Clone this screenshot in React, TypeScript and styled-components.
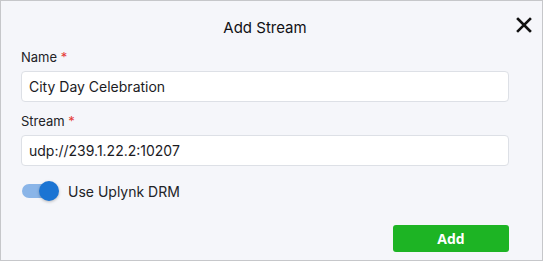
import React from "react";
import styled, { createGlobalStyle } from "styled-components";

const GlobalStyle = createGlobalStyle`
   html, body {
      margin: 0;
      padding: 0;
      background: #ffffff;
   }
   body {
      font-family: Inter, "Noto Sans", sans-serif;
   }
`;

const Dialog = styled.div`
   position: relative;
   box-sizing: border-box;
   width: 543px;
   height: 261px;
   background: #f5f6fa;
   border: 1px solid #c6c7ca;
   padding: 17px 33px 0 20px;
   display: flex;
   flex-direction: column;
`;

const Title = styled.h2`
   margin: 0;
   font-size: 15px;
   line-height: 20px;
   font-weight: 400;
   color: #111114;
   text-align: center;
`;

const CloseButton = styled.button`
   position: absolute;
   top: 15px;
   right: 9px;
   width: 18px;
   height: 18px;
   padding: 0;
   border: none;
   background: none;
   display: flex;
   align-items: center;
   justify-content: center;
   cursor: pointer;
`;

const Field = styled.div`
   display: flex;
   flex-direction: column;
   margin-top: ${({ $top }: { $top: number }) => $top}px;
`;

const Label = styled.label`
   font-size: 13px;
   line-height: 17px;
   color: #222327;
   margin-bottom: 5px;

   span {
      color: #e53935;
   }
`;

const Input = styled.input`
   box-sizing: border-box;
   height: 31px;
   width: 100%;
   border: 1px solid #dde0e6;
   border-radius: 4px;
   background: #ffffff;
   padding: 0 7px;
   font-family: Inter, "Noto Sans", sans-serif;
   font-size: 14px;
   color: #1b1b1f;
   outline: none;
`;

const ToggleRow = styled.label`
   display: flex;
   align-items: center;
   gap: 12px;
   margin-top: 15px;
   height: 20px;
   padding-left: 1px;
   font-size: 14px;
   color: #222327;
`;

const Toggle = styled.span`
   position: relative;
   width: 34px;
   height: 14px;
   border-radius: 7px;
   background: ${({ $on }: { $on: boolean }) => ($on ? "#8ab5e8" : "#b0b3b8")};
`;

const Thumb = styled.span`
   position: absolute;
   top: -3px;
   left: ${({ $on }: { $on: boolean }) => ($on ? "17px" : "-3px")};
   width: 20px;
   height: 20px;
   border-radius: 50%;
   background: ${({ $on }: { $on: boolean }) => ($on ? "#1b74d3" : "#fafafa")};
   box-shadow: 0 1px 3px rgba(0, 0, 0, 0.25);
`;

const Footer = styled.div`
   display: flex;
   justify-content: flex-end;
   margin-top: 24px;
`;

const AddButton = styled.button`
   width: 116px;
   height: 27px;
   border: none;
   border-radius: 3px;
   background: #1db424;
   color: #ffffff;
   font-family: "Open Sans", Inter, sans-serif;
   font-size: 14px;
   font-weight: 700;
   cursor: pointer;
`;

const App: React.FC = () => {
   const [drm, setDrm] = React.useState(true);

   return (
      <>
         <GlobalStyle />
         <Dialog>
            <Title>Add Stream</Title>
            <CloseButton aria-label='Close'>
               <svg width='16' height='16' viewBox='0 0 16 16'>
                  <path d='M2 2 L14 14 M14 2 L2 14' stroke='#111' strokeWidth='2.6' strokeLinecap='square' />
               </svg>
            </CloseButton>

            <Field $top={11}>
               <Label>
                  Name <span>*</span>
               </Label>
               <Input defaultValue='City Day Celebration' />
            </Field>

            <Field $top={11}>
               <Label>
                  Stream <span>*</span>
               </Label>
               <Input defaultValue='udp://239.1.22.2:10207' />
            </Field>

            <ToggleRow onClick={() => setDrm(!drm)}>
               <Toggle $on={drm}>
                  <Thumb $on={drm} />
               </Toggle>
               Use Uplynk DRM
            </ToggleRow>

            <Footer>
               <AddButton>Add</AddButton>
            </Footer>
         </Dialog>
      </>
   );
};

export default App;
